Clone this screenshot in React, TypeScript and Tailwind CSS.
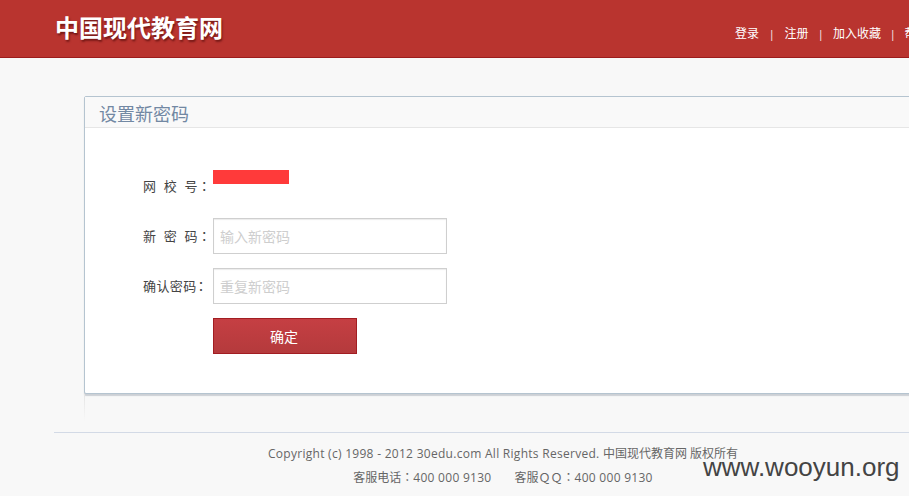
function Colon({ className = "" }: { className?: string }) {
  return <span className={`font-["Noto_Sans_CJK_TC",sans-serif] ${className}`}>：</span>;
}

export default function App() {
  const cjk = 'font-["Open_Sans","Noto_Sans_CJK_SC",sans-serif]';
  return (
    <div className={`relative h-[496px] w-[909px] overflow-hidden bg-[#f8f8f8] ${cjk}`}>
      <header className="flex h-[58px] w-[1100px] items-start border-b border-[#9c1c1c] bg-[#b9342f] pl-[56px]">
        <div className={`mt-[11px] w-[300px] -translate-x-px text-[24px] leading-[36px] font-bold text-white [text-shadow:1px_2px_2px_rgba(60,0,0,0.55)] font-["Liberation_Sans","Noto_Sans_CJK_SC",sans-serif]`}>
          中国现代教育网
        </div>
        <nav className="ml-[379px] mt-[25px] flex items-center whitespace-nowrap text-[12px] leading-[18px] text-white">
          <span>登录</span>
          <span className="mx-[10px] text-[10px]">|</span>
          <span>注册</span>
          <span className="mx-[9.5px] text-[10px]">|</span>
          <span>加入收藏</span>
          <span className="mx-[9px] text-[10px]">|</span>
          <span>帮助中心</span>
        </nav>
      </header>

      <main className="ml-[84px] mt-[38px] w-[1000px]">
        <section className="h-[298px] rounded-[2px] border border-[#b5c4d0] bg-white shadow-[0_2px_1px_rgba(150,160,170,0.45)]">
          <h2 className="h-[31px] border-b border-[#e6e6e6] bg-[#f9f9f9] pl-[14px] text-[18px] leading-[34px] font-normal text-[#7288a3]">
            设置新密码
          </h2>
          <div className="flex flex-col pl-[58px] pt-[42px]">
            <div className="flex h-[41px] items-start">
              <span className="w-[70px] pt-[6px] text-[13px] leading-[20px] tracking-[2.2px] whitespace-pre text-[#444]">网 校 号<Colon className="-ml-[2px]" /></span>
              <span className="h-[14px] w-[76px] bg-[#ff3a3a]" />
            </div>
            <div className="flex h-[50px] items-center">
              <span className="w-[70px] text-[13px] tracking-[2.2px] whitespace-pre text-[#444]">新 密 码<Colon className="-ml-[2px]" /></span>
              <input
                readOnly
                placeholder="输入新密码"
                className="h-[36px] w-[234px] border border-[#cfcfcf] bg-white px-[6px] text-[14px] shadow-[inset_0_1px_1px_rgba(0,0,0,0.08)] outline-none placeholder:text-[#cecece]"
              />
            </div>
            <div className="flex h-[50px] items-center">
              <span className="w-[70px] text-[13px] tracking-[0.4px] whitespace-pre text-[#444]">确认密码<Colon className="-ml-[2px]" /></span>
              <input
                readOnly
                placeholder="重复新密码"
                className="h-[36px] w-[234px] border border-[#cfcfcf] bg-white px-[6px] text-[14px] shadow-[inset_0_1px_1px_rgba(0,0,0,0.08)] outline-none placeholder:text-[#cecece]"
              />
            </div>
            <div className="mt-[7px] pl-[70px]">
              <button className="h-[36px] w-[144px] border border-[#a21d22] bg-gradient-to-b from-[#c53f43] to-[#b43a3c] pr-[2px] text-[14px] text-white">
                确定
              </button>
            </div>
          </div>
        </section>
        <div className="h-[27px] w-px bg-gradient-to-b from-[#e4e4e4] to-[#f8f8f8]" />
      </main>

      <footer className="ml-[54px] mt-[11px] w-[898px] border-t border-[#d3dae6] pt-[11px] text-center text-[12px] leading-[20px] text-[#666]">
        <p><span className="tracking-[0.28px]">Copyright (c) 1998 - 2012 30edu.com All Rights Reserved. </span>中国现代教育网 版权所有</p>
        <p className="mt-[3px] whitespace-pre">客服电话<Colon /><span className="tracking-[0.28px]">400 000 9130</span><span className="ml-[23px]">客服ＱＱ</span><Colon /><span className="tracking-[0.28px]">400 000 9130</span></p>
      </footer>

      <div className={`absolute left-[703px] top-[452px] text-[26px] leading-[30px] text-[#444] font-["Liberation_Sans",sans-serif]`}>
        www.wooyun.org
      </div>
    </div>
  );
}
